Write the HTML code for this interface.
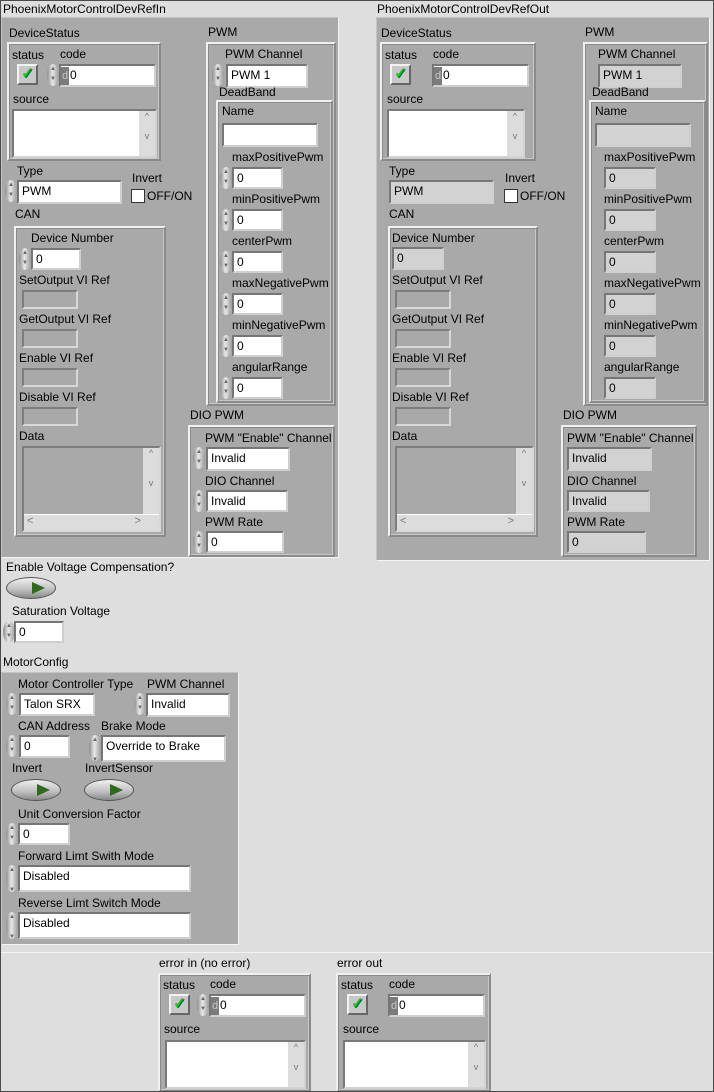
<!DOCTYPE html>
<html><head><meta charset="utf-8"><style>
*{box-sizing:border-box;margin:0;padding:0}
body{width:714px;height:1092px;background:#dedede;font-family:"Liberation Sans",Tahoma,sans-serif;font-size:12px;color:#000;position:relative;overflow:hidden}
#frame{position:absolute;left:0;top:0;width:714px;height:1092px;border:1px solid #4a4a4a;pointer-events:none}
div{position:absolute}
.l{white-space:nowrap;line-height:14px}
.box{background:#a9a9a9;border:2px solid;border-color:#f0f0f0 #8a8a8a #8a8a8a #f0f0f0;box-shadow:inset 1px 1px 0 #8a8a8a, inset -1px -1px 0 #c8c8c8}
.ob{background:#a9a9a9;border:1px solid;border-color:#c4c4c4 #f4f4f4 #f4f4f4 #c4c4c4}
.in,.ind{background:#fff;border:2px solid;border-color:#767676 #cfcfcf #cfcfcf #767676;padding-left:3px;line-height:18px;white-space:nowrap;font-size:12px}
.ind{background:#d2d2d2}
.sp{width:12px;height:22px;border-radius:6px/11px;background:linear-gradient(90deg,#8d8d8d,#e8e8e8 45%,#9a9a9a);font-size:6px;color:#666;text-align:center;line-height:10px}
.led{width:21px;height:21px;background:#c8c8c8;border:2px solid;border-color:#f2f2f2 #666 #666 #f2f2f2;color:#1cc81c;font-weight:bold;font-size:15px;text-align:center;line-height:16px;text-shadow:1px 1px 0 #064}
.ref{background:#a9a9a9;border:2px solid;border-color:#7d7d7d #d8d8d8 #d8d8d8 #7d7d7d}
.ta{background:#fff;border:2px solid;border-color:#7a7a7a #d2d2d2 #d2d2d2 #7a7a7a}
.sb{right:0;top:0;bottom:0;width:16px;background:#dcdcdc;color:#777;font-size:9px;text-align:center}
.tog{width:50px;height:22px;border-radius:25px/11px;background:linear-gradient(#f0f0f0,#bdbdbd 60%,#888);border:1px solid #555}
.tog:after{content:"";position:absolute;left:25px;top:4px;border-left:13px solid #2f6a1c;border-top:6px solid transparent;border-bottom:6px solid transparent}
.chk{width:14px;height:14px;background:#fff;border:1px solid #333}
.d{display:inline-block;width:8px;background:#7b7b7b;color:#c8c8c8;margin-left:-3px;margin-right:1px;text-align:center;font-size:11px}
</style></head><body>

<!-- LEFT CLUSTER -->
<div class="l" style="left:3px;top:2px">PhoenixMotorControlDevRefIn</div>
<div class="ob" style="left:1px;top:17px;width:338px;height:541px"></div>
<div class="l" style="left:9px;top:26px">DeviceStatus</div>
<div class="box" style="left:7px;top:42px;width:154px;height:119px"></div>
<div class="l" style="left:12px;top:48px">status</div>
<div class="l" style="left:60px;top:47px">code</div>
<div class="led" style="left:17px;top:64px">✓</div>
<div class="sp" style="left:47px;top:64px">▲<br>▼</div>
<div class="in" style="left:59px;top:64px;width:97px;height:23px"><span class="d">d</span>0</div>
<div class="l" style="left:13px;top:92px">source</div>
<div class="ta" style="left:12px;top:109px;width:145px;height:49px"><div class="sb">^<br><br>v</div></div>
<div class="l" style="left:17px;top:164px">Type</div>
<div class="sp" style="left:5px;top:180px">▲<br>▼</div>
<div class="in" style="left:17px;top:180px;width:105px;height:24px">PWM</div>
<div class="l" style="left:132px;top:171px">Invert</div>
<div class="chk" style="left:131px;top:189px"></div>
<div class="l" style="left:147px;top:189px">OFF/ON</div>
<div class="l" style="left:15px;top:207px">CAN</div>
<div class="box" style="left:14px;top:226px;width:152px;height:311px"></div>
<div class="l" style="left:31px;top:231px">Device Number</div>
<div class="sp" style="left:19px;top:248px">▲<br>▼</div>
<div class="in" style="left:31px;top:248px;width:50px;height:22px">0</div>
<div class="l" style="left:19px;top:273px">SetOutput VI Ref</div>
<div class="ref" style="left:22px;top:290px;width:56px;height:19px"></div>
<div class="l" style="left:19px;top:312px">GetOutput VI Ref</div>
<div class="ref" style="left:22px;top:329px;width:56px;height:19px"></div>
<div class="l" style="left:19px;top:351px">Enable VI Ref</div>
<div class="ref" style="left:22px;top:368px;width:56px;height:19px"></div>
<div class="l" style="left:19px;top:390px">Disable VI Ref</div>
<div class="ref" style="left:22px;top:407px;width:56px;height:19px"></div>
<div class="l" style="left:19px;top:429px">Data</div>
<div class="ref" style="left:22px;top:446px;width:139px;height:86px"><div class="sb" style="bottom:16px;top:0">^<br><br><br>v</div><div style="left:0;right:0;bottom:0;height:16px;background:#dcdcdc;color:#777;font-size:11px;border-top:1px solid #fff">&nbsp;&lt;<span style="position:absolute;right:18px">&gt;</span></div></div>

<div class="l" style="left:208px;top:25px">PWM</div>
<div class="box" style="left:206px;top:42px;width:130px;height:364px"></div>
<div class="l" style="left:225px;top:47px">PWM Channel</div>
<div class="sp" style="left:212px;top:64px">▲<br>▼</div>
<div class="in" style="left:226px;top:64px;width:82px;height:24px">PWM 1</div>
<div class="l" style="left:219px;top:85px">DeadBand</div>
<div class="box" style="left:216px;top:100px;width:117px;height:303px"></div>
<div class="l" style="left:222px;top:104px">Name</div>
<div class="in" style="left:222px;top:123px;width:96px;height:24px"></div>
<div class="l" style="left:232px;top:150px">maxPositivePwm</div>
<div class="sp" style="left:220px;top:167px">▲<br>▼</div>
<div class="in" style="left:232px;top:167px;width:51px;height:22px">0</div>
<div class="l" style="left:232px;top:192px">minPositivePwm</div>
<div class="sp" style="left:220px;top:209px">▲<br>▼</div>
<div class="in" style="left:232px;top:209px;width:51px;height:22px">0</div>
<div class="l" style="left:232px;top:234px">centerPwm</div>
<div class="sp" style="left:220px;top:251px">▲<br>▼</div>
<div class="in" style="left:232px;top:251px;width:51px;height:22px">0</div>
<div class="l" style="left:232px;top:276px">maxNegativePwm</div>
<div class="sp" style="left:220px;top:293px">▲<br>▼</div>
<div class="in" style="left:232px;top:293px;width:51px;height:22px">0</div>
<div class="l" style="left:232px;top:318px">minNegativePwm</div>
<div class="sp" style="left:220px;top:335px">▲<br>▼</div>
<div class="in" style="left:232px;top:335px;width:51px;height:22px">0</div>
<div class="l" style="left:232px;top:360px">angularRange</div>
<div class="sp" style="left:220px;top:377px">▲<br>▼</div>
<div class="in" style="left:232px;top:377px;width:51px;height:22px">0</div>

<div class="l" style="left:190px;top:408px">DIO PWM</div>
<div class="box" style="left:188px;top:425px;width:147px;height:132px"></div>
<div class="l" style="left:205px;top:431px">PWM "Enable" Channel</div>
<div class="sp" style="left:193px;top:447px">▲<br>▼</div>
<div class="in" style="left:206px;top:447px;width:84px;height:24px">Invalid</div>
<div class="l" style="left:205px;top:474px">DIO Channel</div>
<div class="sp" style="left:193px;top:490px">▲<br>▼</div>
<div class="in" style="left:206px;top:490px;width:82px;height:22px">Invalid</div>
<div class="l" style="left:205px;top:515px">PWM Rate</div>
<div class="sp" style="left:193px;top:531px">▲<br>▼</div>
<div class="in" style="left:206px;top:531px;width:78px;height:22px">0</div>

<!-- RIGHT CLUSTER -->
<div class="l" style="left:377px;top:2px">PhoenixMotorControlDevRefOut</div>
<div class="ob" style="left:376px;top:17px;width:334px;height:544px"></div>
<div class="l" style="left:381px;top:26px">DeviceStatus</div>
<div class="box" style="left:380px;top:42px;width:156px;height:119px"></div>
<div class="l" style="left:385px;top:48px">status</div>
<div class="l" style="left:433px;top:47px">code</div>
<div class="led" style="left:390px;top:64px">✓</div>
<div class="ind" style="left:432px;top:64px;width:97px;height:23px;background:#fff"><span class="d">d</span>0</div>
<div class="l" style="left:387px;top:92px">source</div>
<div class="ta" style="left:387px;top:109px;width:138px;height:49px"><div class="sb">^<br><br>v</div></div>
<div class="l" style="left:389px;top:164px">Type</div>
<div class="ind" style="left:389px;top:180px;width:105px;height:24px">PWM</div>
<div class="l" style="left:505px;top:171px">Invert</div>
<div class="chk" style="left:504px;top:189px"></div>
<div class="l" style="left:520px;top:189px">OFF/ON</div>
<div class="l" style="left:389px;top:207px">CAN</div>
<div class="box" style="left:388px;top:226px;width:150px;height:311px"></div>
<div class="l" style="left:392px;top:231px">Device Number</div>
<div class="ind" style="left:392px;top:247px;width:52px;height:23px">0</div>
<div class="l" style="left:392px;top:273px">SetOutput VI Ref</div>
<div class="ref" style="left:395px;top:290px;width:56px;height:19px"></div>
<div class="l" style="left:392px;top:312px">GetOutput VI Ref</div>
<div class="ref" style="left:395px;top:329px;width:56px;height:19px"></div>
<div class="l" style="left:392px;top:351px">Enable VI Ref</div>
<div class="ref" style="left:395px;top:368px;width:56px;height:19px"></div>
<div class="l" style="left:392px;top:390px">Disable VI Ref</div>
<div class="ref" style="left:395px;top:407px;width:56px;height:19px"></div>
<div class="l" style="left:392px;top:429px">Data</div>
<div class="ref" style="left:395px;top:446px;width:139px;height:86px"><div class="sb" style="bottom:16px;top:0">^<br><br><br>v</div><div style="left:0;right:0;bottom:0;height:16px;background:#dcdcdc;color:#777;font-size:11px;border-top:1px solid #fff">&nbsp;&lt;<span style="position:absolute;right:18px">&gt;</span></div></div>

<div class="l" style="left:585px;top:25px">PWM</div>
<div class="box" style="left:583px;top:42px;width:125px;height:364px"></div>
<div class="l" style="left:598px;top:47px">PWM Channel</div>
<div class="ind" style="left:598px;top:64px;width:84px;height:24px">PWM 1</div>
<div class="l" style="left:592px;top:85px">DeadBand</div>
<div class="box" style="left:589px;top:100px;width:117px;height:303px"></div>
<div class="l" style="left:595px;top:104px">Name</div>
<div class="ind" style="left:595px;top:123px;width:96px;height:24px"></div>
<div class="l" style="left:604px;top:150px">maxPositivePwm</div>
<div class="ind" style="left:604px;top:167px;width:52px;height:22px">0</div>
<div class="l" style="left:604px;top:192px">minPositivePwm</div>
<div class="ind" style="left:604px;top:209px;width:52px;height:22px">0</div>
<div class="l" style="left:604px;top:234px">centerPwm</div>
<div class="ind" style="left:604px;top:251px;width:52px;height:22px">0</div>
<div class="l" style="left:604px;top:276px">maxNegativePwm</div>
<div class="ind" style="left:604px;top:293px;width:52px;height:22px">0</div>
<div class="l" style="left:604px;top:318px">minNegativePwm</div>
<div class="ind" style="left:604px;top:335px;width:52px;height:22px">0</div>
<div class="l" style="left:604px;top:360px">angularRange</div>
<div class="ind" style="left:604px;top:377px;width:52px;height:22px">0</div>

<div class="l" style="left:563px;top:408px">DIO PWM</div>
<div class="box" style="left:561px;top:425px;width:136px;height:132px"></div>
<div class="l" style="left:567px;top:431px">PWM "Enable" Channel</div>
<div class="ind" style="left:567px;top:447px;width:85px;height:24px">Invalid</div>
<div class="l" style="left:567px;top:474px">DIO Channel</div>
<div class="ind" style="left:567px;top:490px;width:83px;height:22px">Invalid</div>
<div class="l" style="left:567px;top:515px">PWM Rate</div>
<div class="ind" style="left:567px;top:531px;width:79px;height:22px">0</div>

<!-- MIDDLE -->
<div class="l" style="left:6px;top:560px">Enable Voltage Compensation?</div>
<div class="tog" style="left:6px;top:577px"></div>
<div class="l" style="left:12px;top:604px">Saturation Voltage</div>
<div class="sp" style="left:3px;top:621px">▲<br>▼</div>
<div class="in" style="left:14px;top:621px;width:50px;height:22px">0</div>

<div class="l" style="left:3px;top:655px">MotorConfig</div>
<div class="ob" style="left:1px;top:672px;width:238px;height:273px"></div>
<div class="l" style="left:18px;top:677px">Motor Controller Type</div>
<div class="l" style="left:147px;top:677px">PWM Channel</div>
<div class="sp" style="left:6px;top:693px">▲<br>▼</div>
<div class="in" style="left:19px;top:693px;width:76px;height:23px">Talon SRX</div>
<div class="sp" style="left:134px;top:693px">▲<br>▼</div>
<div class="in" style="left:146px;top:693px;width:84px;height:24px">Invalid</div>
<div class="l" style="left:18px;top:719px">CAN Address</div>
<div class="l" style="left:101px;top:719px">Brake Mode</div>
<div class="sp" style="left:6px;top:735px">▲<br>▼</div>
<div class="in" style="left:19px;top:735px;width:51px;height:23px">0</div>
<div class="sp" style="left:89px;top:735px;height:26px">▲<br><br>▼</div>
<div class="in" style="left:101px;top:735px;width:125px;height:27px">Override to Brake</div>
<div class="l" style="left:12px;top:761px">Invert</div>
<div class="l" style="left:85px;top:761px">InvertSensor</div>
<div class="tog" style="left:11px;top:779px"></div>
<div class="tog" style="left:84px;top:779px"></div>
<div class="l" style="left:18px;top:807px">Unit Conversion Factor</div>
<div class="sp" style="left:6px;top:823px">▲<br>▼</div>
<div class="in" style="left:18px;top:823px;width:52px;height:22px">0</div>
<div class="l" style="left:18px;top:849px">Forward Limt Swith Mode</div>
<div class="sp" style="left:6px;top:865px;height:27px">▲<br><br>▼</div>
<div class="in" style="left:18px;top:865px;width:173px;height:27px">Disabled</div>
<div class="l" style="left:18px;top:896px">Reverse Limt Switch Mode</div>
<div class="sp" style="left:6px;top:912px;height:27px">▲<br><br>▼</div>
<div class="in" style="left:18px;top:912px;width:173px;height:27px">Disabled</div>

<div style="left:0;top:952px;width:714px;height:1px;background:#f4f4f4"></div>

<!-- ERRORS -->
<div class="l" style="left:159px;top:956px">error in (no error)</div>
<div class="box" style="left:158px;top:973px;width:153px;height:119px"></div>
<div class="l" style="left:163px;top:978px">status</div>
<div class="l" style="left:210px;top:977px">code</div>
<div class="led" style="left:169px;top:994px">✓</div>
<div class="sp" style="left:197px;top:994px">▲<br>▼</div>
<div class="in" style="left:209px;top:994px;width:97px;height:23px"><span class="d">d</span>0</div>
<div class="l" style="left:164px;top:1022px">source</div>
<div class="ta" style="left:165px;top:1040px;width:141px;height:49px"><div class="sb">^<br><br>v</div></div>

<div class="l" style="left:337px;top:956px">error out</div>
<div class="box" style="left:336px;top:973px;width:155px;height:119px"></div>
<div class="l" style="left:341px;top:978px">status</div>
<div class="l" style="left:389px;top:977px">code</div>
<div class="led" style="left:347px;top:994px">✓</div>
<div class="in" style="left:388px;top:994px;width:97px;height:23px"><span class="d">d</span>0</div>
<div class="l" style="left:343px;top:1022px">source</div>
<div class="ta" style="left:343px;top:1040px;width:143px;height:49px"><div class="sb">^<br><br>v</div></div>

<div id="frame"></div>
</body></html>
